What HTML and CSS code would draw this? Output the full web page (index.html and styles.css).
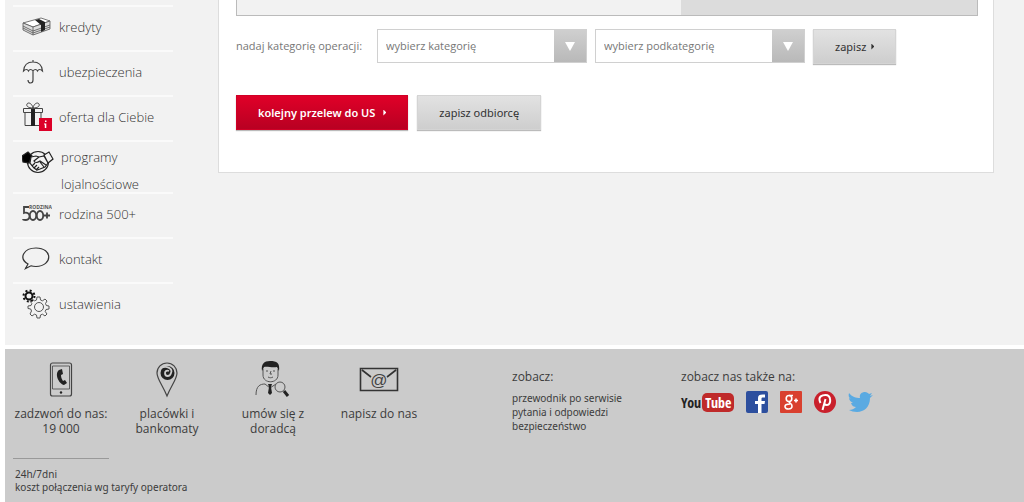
FILE: index.html
```
<!DOCTYPE html>
<html lang="pl">
<head>
<meta charset="utf-8">
<title>Bankowość internetowa</title>
<link rel="stylesheet" href="styles.css">
</head>
<body>
<div class="page">
  <nav class="sidebar">
    <ul class="menu">
      <li><a href="#">
        <svg width="30" height="20" viewBox="0 0 30 20" fill="none" stroke="#555" stroke-width=".8"><path fill="#fff" d="M1 6 19 1l9 3-17 6z"/><path fill="#ddd" d="M1 6v7l10 5 17-6V4l-17 6z"/><path d="M11 10v8M1 9l10 5 17-6M1 11l10 5 17-6"/><path fill="#222" stroke="none" d="m13 3 4-1 6 3v8l-4 2V8z"/></svg>
        <span>kredyty</span></a></li>
      <li><a href="#">
        <svg width="30" height="26" viewBox="0 0 30 26" fill="none" stroke="#444" stroke-width="1.200"><path d="M1.500 12C2 6 6 3 11 3s9 3 9.500 9c-2-2-4-2-5 0-1-2-3-2-4.500 0-1.500-2-3.500-2-4.500 0-1-2-3-2-5 0zM11 1v2M11 12v9c0 4-5 4-5 0"/></svg>
        <span>ubezpieczenia</span></a></li>
      <li><a href="#">
        <svg width="30" height="30" viewBox="0 0 30 30" fill="none" stroke="#444"><path d="M1.500 6.500h19v4h-19zM3 10.500v13h16v-13M11 6C6 6 4 4 5 2s5-1 6 4c1-5 5-6 6-4s-1 4-6 4z"/><path fill="#222" stroke="none" d="M9 7h4v17H9z"/><path fill="#dc0028" stroke="none" d="M17 16h13v13H17z"/><path fill="#fff" stroke="none" d="M23 18.500h1.500V20H23zM22 21.500h2.300V26h-1.500v-3.500H22z"/></svg>
        <span>oferta dla Ciebie</span></a></li>
      <li class="menu-tall"><a href="#">
        <svg width="32" height="24" viewBox="0 0 32 24" fill="none" stroke="#222" stroke-width="1.200"><circle cx="16" cy="12" r="10.500"/><path fill="#000" d="m0 6 6-4 4 4-3 7-6-1z"/><path fill="#f2f2f2" d="m22 5 5-3 4 7-5 4zM9 7l5-1 3 1 5-1 4 7-3 4-5 2-3 1-3-2-4-5z"/><path d="m17 7-5 4c1 2 3 2 6 0l6 4M18 12l4 5M10 16l3-3M12 18l3-3M14 20l3-3"/></svg>
        <span>programy lojalnościowe</span></a></li>
      <li><a href="#">
        <svg width="30" height="22" viewBox="0 0 30 22" fill="none" stroke="#444" stroke-width="1.800"><text x="7" y="6" class="family-text">RODZINA</text><path d="M7 4H2v6c7-2 7 7 2 7-1 0-3 0-3-1M22 12.500h6M25 9.500v6"/><ellipse cx="11" cy="12.500" rx="3.200" ry="4.500"/><ellipse cx="18" cy="12.500" rx="3.200" ry="4.500"/></svg>
        <span>rodzina 500+</span></a></li>
      <li><a href="#">
        <svg width="30" height="26" viewBox="0 0 30 26" fill="none" stroke="#333" stroke-width="1.200"><path d="M6 18C-4 12 2 2 14 2c17 0 17 18 0 18.500-2 0-4-.3-5-.7L3.500 22.500 6 18z"/></svg>
        <span>kontakt</span></a></li>
      <li><a href="#">
        <svg width="30" height="30" viewBox="0 0 30 30" fill="none"><circle cx="7" cy="7" r="3.500" stroke="#111" stroke-width="2"/><circle cx="7" cy="7" r="5.500" stroke="#111" stroke-width="2" stroke-dasharray="2 2.320"/><path stroke="#555" d="m15 8 3 0 .5 3 2 .8 2.500-1.800 2 2-1.500 2.500.8 2 2.700.5v3l-3 .5-.8 2 1.800 2.500-2 2-2.500-1.800-2 .8-.5 3h-3l-.5-3-2-.8-2.500 1.800-2-2L9.500 22l-.8-2-2.700-.5V17l3-.5.8-2-1.800-2.500 2-2 2.500 1.800 2-.8z"/><circle cx="17" cy="18" r="4.500" stroke="#555"/></svg>
        <span>ustawienia</span></a></li>
    </ul>
  </nav>
  <main class="card">
    <div class="summary"><div class="summary-side"></div></div>
    <form class="category">
      <label for="cat">nadaj kategorię operacji:</label>
      <div class="select"><select id="cat"><option>wybierz kategorię</option></select></div>
      <div class="select"><select id="subcat" aria-label="podkategoria"><option>wybierz podkategorię</option></select></div>
      <button class="btn" type="button">zapisz<i class="caret"></i></button>
    </form>
    <div class="actions">
      <button class="btn btn-red" type="button">kolejny przelew do US<i class="caret"></i></button>
      <button class="btn" type="button">zapisz odbiorcę</button>
    </div>
  </main>
</div>
<footer class="footer">
  <div class="contact">
    <div class="tiles">
      <a href="#"><svg width="40" height="38" viewBox="0 0 40 38" fill="none" stroke="#444" stroke-width="1.200"><rect x="9.500" y="3" width="21" height="33" rx="2"/><path stroke-width=".8" d="M11.500 6h17v23h-17z"/><path fill="#222" stroke="none" d="m18 10 3-1 1 5-2 1c0 3 1 4 2 6l2-1 2 3-3 2c-5-1-10-11-5-15z"/><circle cx="20" cy="32.500" r="1.200" fill="#222" stroke="none"/></svg><span>zadzwoń do nas:<br>19 000</span></a>
      <a href="#"><svg width="40" height="38" viewBox="0 0 40 38" fill="none" stroke="#444" stroke-width="1.200"><path d="M20 36C16 26 10 19 10 13a10 10 0 0 1 20 0c0 6-6 13-10 23z"/><circle cx="20.500" cy="13" r="7" fill="#222" stroke="none"/><path stroke="#ccc" stroke-width="1.800" d="M14 8c6-3 12 1 10 5-1 4-6 4-6 0 0-2 2-3 4-2"/></svg><span>placówki i<br>bankomaty</span></a>
      <a href="#"><svg width="40" height="38" viewBox="0 0 40 38" fill="none" stroke="#555"><path d="M10 9v6c0 9 15 9 15 0V9M3 35c0-9 4-11 9-11l5 4 6-4"/><path fill="#222" stroke="none" d="M9 11c-1-7 2-10 8-10 7 0 10 2 9 10l-2-4c-5 1-10-1-13 0z"/><path fill="#222" stroke="none" d="M15 24h4l-1 3 1 6-2 2-2-2 1-6z"/><path d="M13 11h2M20 11h2M18 11l-1 3h2M15 17c2 1 3 1 5 0"/><circle cx="27" cy="27" r="5" fill="#ccc"/><path stroke="#222" stroke-width="3" d="m31 31 4 5"/></svg><span>umów się z<br>doradcą</span></a>
      <a href="#"><svg width="40" height="38" viewBox="0 0 40 38" fill="none" stroke="#333"><path stroke-width="1.600" d="M1.500 8.500h37v22h-37zM3 10l9 7M37 10l-9 7"/><text x="20" y="26" class="at">@</text></svg><span>napisz do nas</span></a>
    </div>
    <p class="note">24h/7dni<br>koszt połączenia wg taryfy operatora</p>
  </div>
  <div class="links">
    <h2>zobacz:</h2>
    <a href="#">przewodnik po serwisie</a>
    <a href="#">pytania i odpowiedzi</a>
    <a href="#">bezpieczeństwo</a>
  </div>
  <div class="social">
    <h2>zobacz nas także na:</h2>
    <div class="social-icons">
      <a class="youtube" href="#"><span>You</span><span class="tube">Tube</span></a>
      <a href="#" aria-label="Facebook"><svg width="22" height="22" viewBox="0 0 22 22"><rect width="22" height="22" rx="2" fill="#2d4f9e"/><path fill="#fff" d="M12 22v-9H9v-3h3V7c0-3 2-4 7-3.500v3c-3-.3-3.500 0-3.500 1.500v2H19l-.5 3h-3v9z"/></svg></a>
      <a href="#" aria-label="Google+"><svg width="22" height="22" viewBox="0 0 22 22"><rect width="22" height="22" rx="1" fill="#d9402f"/><g fill="none" stroke="#fff" stroke-width="1.600"><ellipse cx="9" cy="7.500" rx="2.800" ry="3"/><path d="M9 4.500h4M9 10.500c0 2 3 2 3 4.500 0 4-7 4-7 .5 0-2 2-2.500 5-2.500M14 9.500h4M16 7.500v4"/></g></svg></a>
      <a href="#" aria-label="Pinterest"><svg width="22" height="22" viewBox="0 0 22 22"><circle cx="11" cy="11" r="11" fill="#c9202c"/><path fill="none" stroke="#fff" stroke-width="2" d="M6.500 12C3 5 9 4 11.500 4c6 0 6 10 1.500 10-2 0-2.500-1-2.500-1M11.500 8 8.500 19"/></svg></a>
      <a href="#" aria-label="Twitter"><svg width="25" height="22" viewBox="0 0 25 22"><path fill="#5aaae2" d="M1 2c3 4 7 5 11 5-1-4 2-6 5-6 2 0 3 1 4 2l3-1-2 3 3-1-3 3c0 9-6 14-13 14-3 0-6-1-8-2 3 0 5-1 7-3-2 0-4-1-5-4h2c-2-1-4-3-4-5l2 1C1 7 0 5 1 2z"/></svg></a>
    </div>
  </div>
</footer>
</body>
</html>
```
FILE: styles.css
```
* { box-sizing: border-box; }
body {
  margin: 0;
  min-height: 100vh;
  padding-left: 5px;
  display: flex;
  flex-direction: column;
  gap: 4px;
  background: #fff;
  color: #3c3c3c;
  font-family: "Open Sans", "Noto Sans", sans-serif;
  font-size: 12px;
}
a { color: inherit; text-decoration: none; }
svg { display: block; flex: none; }
.page {
  display: flex;
  align-items: flex-start;
  gap: 45px;
  padding-right: 30px;
  background: #f2f2f2;
}
.sidebar { width: 168px; padding: 5px 0 18px 8px; }
.menu { margin: 0; padding: 0; list-style: none; }
.menu li { border-top: 2px solid #fafafa; }
.menu a {
  display: flex;
  align-items: center;
  gap: 7px;
  height: 43px;
  padding: 0 0 3px 9px;
  color: #333;
  font: 300 13px/27px "Open Sans", sans-serif;
}
.menu .menu-tall a { height: 50px; align-items: flex-start; padding-top: 2px; }
.menu-tall svg { margin-top: 6px; }
.family-text { font: 700 5px "Open Sans", sans-serif; fill: #555; stroke: none; }
.card {
  flex: 1;
  min-width: 0;
  padding: 0 15px 42px 17px;
  border: 1px solid #ddd;
  border-top: 0;
  background: #fff;
}
.summary {
  display: flex;
  justify-content: flex-end;
  height: 16px;
  border: 1px solid #bbb;
  border-top: 0;
  background: #f2f2f2;
}
.summary-side { width: 40%; background: #dcdcdc; }
.category {
  display: flex;
  align-items: flex-start;
  gap: 8px;
  margin: 13px 0 31px;
  color: #777;
}
.category label { width: 133px; font-size: 11px; line-height: 34px; white-space: nowrap; }
.select { position: relative; width: 210px; }
.select select {
  appearance: none;
  width: 100%;
  height: 34px;
  padding: 0 40px 1px 8px;
  border: 1px solid #d0d0d0;
  border-radius: 0;
  background: linear-gradient(#d0d0d0, #b8b8b8) right / 33px 100% no-repeat border-box #fff;
  color: #777;
  font: 400 11px "Open Sans", sans-serif;
}
.select::after {
  content: "";
  position: absolute;
  top: 13px;
  right: 12px;
  width: 10px;
  height: 9px;
  background: #fff;
  clip-path: polygon(0 0, 100% 0, 50% 100%);
  pointer-events: none;
}
.btn {
  display: flex;
  align-items: center;
  gap: 5px;
  height: 35px;
  padding: 0 21px;
  border: 1px solid #d4d4d4;
  background: linear-gradient(#e2e2e2, #cecece);
  box-shadow: 0 1px 1px #bbb;
  color: #333;
  font: 400 11px "Noto Sans", sans-serif;
}
.btn-red {
  gap: 8px;
  border-color: #d00026;
  background: linear-gradient(#e00028, #b80022);
  color: #fff;
  font-weight: 600;
}
.caret { width: 3px; height: 6px; background: currentColor; clip-path: polygon(0 0, 100% 50%, 0 100%); }
.actions { display: flex; gap: 9px; }
.footer {
  flex: 1;
  display: flex;
  align-items: flex-start;
  padding: 11px 0 8px 3px;
  background: #cbcbcb;
}
.contact { width: 504px; }
.tiles { display: flex; }
.tiles a {
  width: 106px;
  display: flex;
  flex-direction: column;
  align-items: center;
  gap: 8px;
  text-align: center;
  line-height: 15px;
}
.at { font: 17px "Liberation Sans", sans-serif; text-anchor: middle; fill: #444; stroke: none; }
.note { margin: 22px 0 0 5px; padding: 0 0 0 2px; font: 10px/13px "Noto Sans", sans-serif; }
.note::before { content: ""; display: block; width: 96px; margin: 0 0 9px -2px; border-top: 1px solid #999; }
.links { width: 169px; display: flex; flex-direction: column; font: 10px/14px "Noto Sans", sans-serif; }
.footer h2 { margin: 8px 0 5px; font: 400 12px/18px "Open Sans", sans-serif; }
.social-icons { display: flex; align-items: center; gap: 12px; }
.youtube {
  display: flex;
  align-items: center;
  gap: 1px;
  color: #222;
  font: 700 14px/19px "Liberation Sans Narrow", "Open Sans Condensed", "Roboto Condensed", "Liberation Sans", sans-serif;
}
.tube { padding: 0 3px; border-radius: 5px; background: #bf2a2a; color: #fff; }
```
